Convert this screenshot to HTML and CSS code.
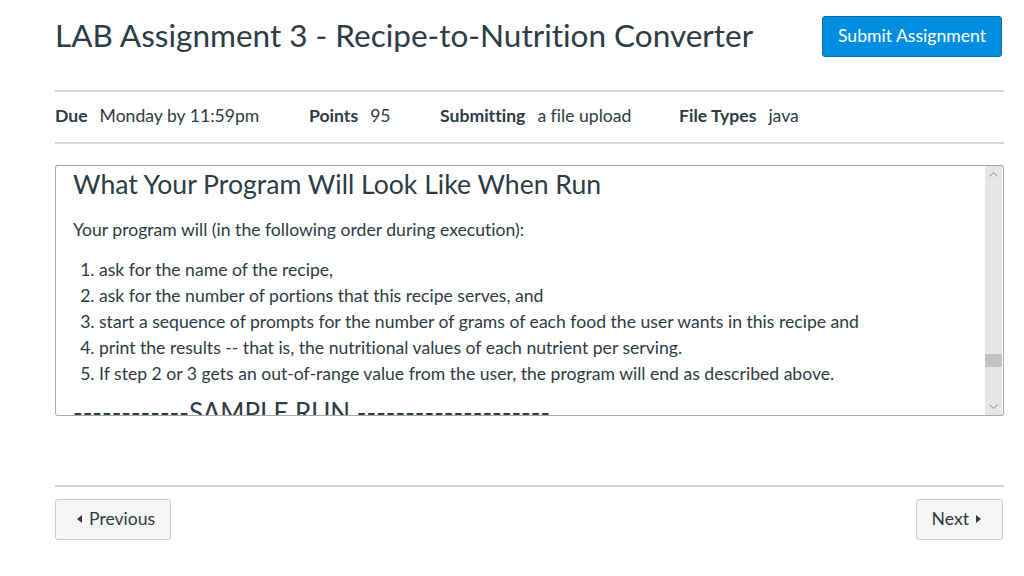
FILE: index.html
```html
<!DOCTYPE html>
<html>
<head>
<meta charset="utf-8">
<link rel="stylesheet" href="styles.css">
</head>
<body>
<div class="page">
  <header class="header">
    <h1 class="title">LAB Assignment 3 - Recipe-to-Nutrition Converter</h1>
    <button class="btn-primary">Submit Assignment</button>
  </header>
  <div class="details">
    <div class="detail"><span class="label">Due</span><span class="value">Monday by 11:59pm</span></div>
    <div class="detail"><span class="label">Points</span><span class="value">95</span></div>
    <div class="detail"><span class="label">Submitting</span><span class="value">a file upload</span></div>
    <div class="detail"><span class="label">File Types</span><span class="value">java</span></div>
  </div>
  <div class="frame">
    <div class="frame-content">
      <h2 class="section-title first">What Your Program Will Look Like When Run</h2>
      <p class="intro">Your program will (in the following order during execution):</p>
      <ol class="steps">
        <li>ask for the name of the recipe,</li>
        <li>ask for the number of portions that this recipe serves, and</li>
        <li>start a sequence of prompts for the number of grams of each food the user wants in this recipe and</li>
        <li>print the results -- that is, the nutritional values of each nutrient per serving.</li>
        <li>If step 2 or 3 gets an out-of-range value from the user, the program will end as described above.</li>
      </ol>
      <h2 class="section-title sample">------------SAMPLE RUN --------------------</h2>
    </div>
    <div class="scrollbar">
      <svg class="arrow" width="17" height="17" viewBox="0 0 17 17"><path d="M4.5 10.5 L8.5 6.5 L12.5 10.5" fill="none" stroke="#8a8a8a" stroke-width="1"/></svg>
      <div class="track"><div class="thumb"></div></div>
      <svg class="arrow" width="17" height="17" viewBox="0 0 17 17"><path d="M4.5 6.5 L8.5 10.5 L12.5 6.5" fill="none" stroke="#8a8a8a" stroke-width="1"/></svg>
    </div>
  </div>
  <nav class="pager">
    <button class="btn prev"><span class="tri-left"></span>Previous</button>
    <button class="btn next">Next<span class="tri-right"></span></button>
  </nav>
</div>
</body>
</html>
```
FILE: styles.css
```css
* { box-sizing: border-box; }
html, body { margin: 0; padding: 0; background: #fff; }
body {
  font-family: Lato, "Open Sans", sans-serif; color: #2d3b45;
  font-variant-ligatures: none; font-feature-settings: "liga" 0;
}
.page { width: 949px; margin-left: 55px; }
.header {
  display: flex; justify-content: space-between; align-items: flex-start;
  padding-top: 16px; padding-bottom: 33px;
  border-bottom: 2px solid #d1d5d8;
}
.title { margin: 0; font-size: 31.5px; font-weight: 400; line-height: 39px; }
.btn-primary {
  width: 180px; height: 41px; margin-right: 2px;
  background: #008ee2; color: #fff; border: 1px solid #0770a3; border-radius: 3px;
  font-family: Lato, sans-serif; font-size: 17.6px; padding: 0 0 3px;
}
.details {
  display: flex; align-items: center; height: 52px; padding-bottom: 4px;
  border-bottom: 2px solid #d1d5d8;
  font-size: 17.6px;
}
.detail { display: flex; gap: 12px; }
.detail:nth-child(1) { width: 254px; }
.detail:nth-child(2) { width: 131px; }
.detail:nth-child(3) { width: 239px; }
.label { font-weight: 700; }
.frame {
  margin-top: 21px; height: 251px;
  border: 1px solid #a9a9a9; border-top-color: #9e9e9e; border-radius: 3px;
  display: flex; overflow: hidden;
}
.frame-content { flex: 1; padding: 0 17px; overflow: hidden; }
.section-title { margin: 0; font-size: 26.6px; font-weight: 400; line-height: 38px; white-space: nowrap; }
.section-title.first { line-height: 36px; }
.section-title.sample { margin-top: 6px; font-size: 26px; }
.intro { margin: 16px 0 0; font-size: 17.6px; line-height: 24px; }
.steps { margin: 15px 0 0; padding-left: 26px; font-size: 17.6px; line-height: 26px; }
.scrollbar {
  width: 17px; margin-right: 1px; background: #e6e6e6;
  display: flex; flex-direction: column;
}
.arrow { display: block; flex: none; }
.track { flex: 1; position: relative; }
.thumb { position: absolute; left: 0; right: 0; top: 171px; height: 13px; background: #c1c1c1; }
.pager {
  margin-top: 69px; padding-top: 12px;
  border-top: 2px solid #d1d5d8;
  display: flex; justify-content: space-between;
}
.btn {
  height: 41px;
  background: #f5f5f5; color: #2d3b45;
  border: 1px solid #c7cdd1; border-radius: 3px;
  font-family: Lato, sans-serif; font-size: 17.6px;
  display: flex; align-items: center;
}
.btn.prev { padding: 0 15px 2px 21px; }
.btn.next { padding: 0 21px 2px 15px; margin-right: 1px; }
.tri-left, .tri-right { display: inline-block; width: 0; height: 0; border-top: 4px solid transparent; border-bottom: 4px solid transparent; }
.tri-left { border-right: 5px solid #2d3b45; margin-right: 7px; }
.tri-right { border-left: 5px solid #2d3b45; margin-left: 7px; }
```
